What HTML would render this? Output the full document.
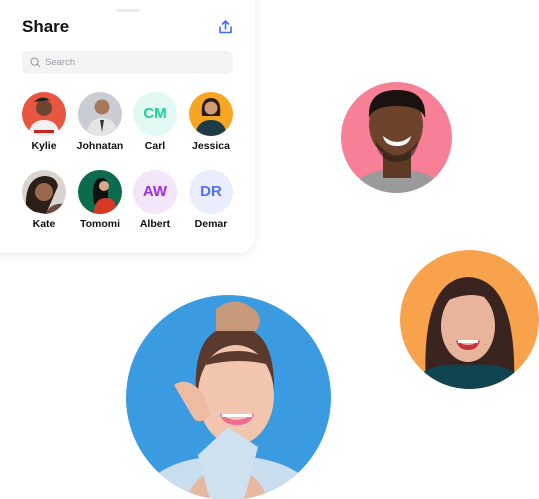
<!DOCTYPE html>
<html><head><meta charset="utf-8"><style>
html,body{margin:0;padding:0;background:#fff;width:539px;height:499px;overflow:hidden;position:relative;font-family:"Liberation Sans",sans-serif}
.card{position:absolute;left:-20px;top:-20px;width:275px;height:273px;background:#fff;border-radius:0 0 16px 0;box-shadow:0 2px 10px rgba(0,0,0,.08)}
.handle{position:absolute;left:116px;top:9px;width:24px;height:3px;border-radius:2px;background:#ececec}
.title{position:absolute;left:22px;top:17px;font-size:17px;font-weight:bold;color:#111}
.search{position:absolute;left:22px;top:51px;width:211px;height:23px;border-radius:6px;background:#f3f3f4}
.search span{position:absolute;left:23px;top:6px;font-size:9.5px;color:#9a9aa0}
.av{position:absolute;width:44px;height:44px;border-radius:50%;overflow:hidden;text-align:center;line-height:44px;font-size:15px;font-weight:bold}
.lb{position:absolute;width:70px;text-align:center;font-size:10.5px;font-weight:bold;color:#111}
svg{display:block}
</style></head><body>
<div class="card"></div>
<div class="handle"></div>
<div class="title">Share</div>
<svg style="position:absolute;left:218px;top:19px" width="15" height="16" viewBox="0 0 15 16"><path d="M7.5 10V2M4.5 5l3-3 3 3M2 8v5.5h11V8" fill="none" stroke="#3d6ef5" stroke-width="1.6" stroke-linecap="round" stroke-linejoin="round"/></svg>
<div class="search"><svg style="position:absolute;left:8px;top:6px" width="11" height="11" viewBox="0 0 11 11"><circle cx="4.6" cy="4.6" r="3.6" fill="none" stroke="#999" stroke-width="1.1"/><path d="M7.3 7.3l2.6 2.6" stroke="#999" stroke-width="1.1"/></svg><span>Search</span></div>

<div class="av" style="left:22px;top:92px;background:#e8563f"><svg width="44" height="44"><circle cx="22" cy="16" r="8" fill="#6b4633"/><path d="M12 10q10-10 20 2l-4-4z" fill="#222"/><path d="M6 44q2-16 16-16t16 16z" fill="#f2f2f2"/><rect x="12" y="38" width="20" height="3" fill="#c22"/></svg></div>
<div class="av" style="left:78px;top:92px;background:#c9ccd3"><svg width="44" height="44"><circle cx="24" cy="15" r="7.5" fill="#a77858"/><path d="M8 44q2-18 16-18t16 18z" fill="#e4e4e4"/><path d="M22 28l2 12 2-12z" fill="#333"/></svg></div>
<div class="av" style="left:133px;top:92px;background:#e2f8f2;color:#1fcf9b">CM</div>
<div class="av" style="left:189px;top:92px;background:#f6a623"><svg width="44" height="44"><path d="M13 24q-2-18 9-18t9 18z" fill="#2a1b15"/><circle cx="22" cy="16" r="6.5" fill="#d29a7a"/><path d="M6 44q2-16 16-16t16 16z" fill="#1e3b47"/></svg></div>
<div class="lb" style="left:9px;top:140px">Kylie</div>
<div class="lb" style="left:65px;top:140px">Johnatan</div>
<div class="lb" style="left:120px;top:140px">Carl</div>
<div class="lb" style="left:176px;top:140px">Jessica</div>

<div class="av" style="left:22px;top:170px;background:#d8d3cf"><svg width="44" height="44"><path d="M4 40q-2-32 18-34 12 0 14 10l-12 28z" fill="#2c1f1a"/><circle cx="22" cy="22" r="9" fill="#9b6a4e"/><path d="M24 44q4-12 20-10v10z" fill="#6a4a3a"/></svg></div>
<div class="av" style="left:78px;top:170px;background:#0c6b4c"><svg width="44" height="44"><path d="M16 34q-4-26 8-26 6 0 6 10v20z" fill="#111"/><circle cx="26" cy="16" r="5" fill="#d9a88a"/><path d="M16 44q0-16 12-16t10 16z" fill="#d63a25"/></svg></div>
<div class="av" style="left:133px;top:170px;background:#f3e6fb;color:#9b2ee0">AW</div>
<div class="av" style="left:189px;top:170px;background:#eaedfd;color:#5470f0">DR</div>
<div class="lb" style="left:9px;top:218px">Kate</div>
<div class="lb" style="left:65px;top:218px">Tomomi</div>
<div class="lb" style="left:120px;top:218px">Albert</div>
<div class="lb" style="left:176px;top:218px">Demar</div>

<svg style="position:absolute;left:341px;top:82px" width="111" height="111" viewBox="0 0 111 111"><defs><clipPath id="c1"><circle cx="55.5" cy="55.5" r="55.5"/></clipPath></defs><g clip-path="url(#c1)"><rect width="111" height="111" fill="#f77f96"/><path d="M10 111q4-22 46-24 42 2 46 24z" fill="#9a9a9a"/><rect x="42" y="62" width="28" height="34" fill="#5e3a26"/><ellipse cx="55" cy="43" rx="27" ry="32" fill="#6e432c"/><path d="M28 36q-2-28 28-28t28 28q-4-12-28-12t-28 12z" fill="#1a1210"/><path d="M42 54q14 12 28 0q-2 10-14 10t-14-10z" fill="#fff"/><path d="M34 58q22 30 44 0q-4 22-22 22t-22-22z" fill="#2a1a14" opacity=".6"/></g></svg>

<svg style="position:absolute;left:400px;top:250px" width="139" height="139" viewBox="0 0 139 139"><defs><clipPath id="c2"><circle cx="69.5" cy="69.5" r="69.5"/></clipPath></defs><g clip-path="url(#c2)"><rect width="139" height="139" fill="#f8a24c"/><path d="M26 139q-6-110 42-112 50 2 46 112z" fill="#3a2420"/><ellipse cx="68" cy="76" rx="27" ry="36" fill="#e8b49c"/><path d="M44 52q4-24 30-22 18 4 20 22q-20-14-50 0z" fill="#3a2420"/><path d="M56 90q12 10 24 0q-2 10-12 10t-12-10z" fill="#c7333c"/><path d="M58 90h20v3h-20z" fill="#fff"/><path d="M10 139q10-28 58-24 50-4 60 24z" fill="#0f4451"/></g></svg>

<svg style="position:absolute;left:126px;top:295px" width="205" height="205" viewBox="0 0 205 205"><defs><clipPath id="c3"><circle cx="102.5" cy="102.5" r="102.5"/></clipPath></defs><g clip-path="url(#c3)"><rect width="205" height="205" fill="#3a9be0"/><path d="M10 205q20-44 92-44 72 0 94 44z" fill="#c8ddee"/><path d="M60 205q10-30 42-34 30 4 40 34z" fill="#e7b8a0"/><path d="M70 100q-4-70 40-68 40 0 38 68z" fill="#5a3a2c"/><path d="M90 14q20-16 40 2 8 10 0 20h-40z" fill="#c69a7a"/><ellipse cx="110" cy="100" rx="38" ry="50" fill="#f1c5ae"/><path d="M80 70q4-14 32-14 24 0 32 14q-30-8-64 0z" fill="#5a3a2c"/><path d="M94 118q16 14 34 0q-2 12-17 12t-17-12z" fill="#ee6b94"/><path d="M96 119h30v3h-30z" fill="#fff"/><path d="M48 90q14-10 30 10l6 20q-10 10-16 4z" fill="#ecbba2"/><path d="M72 160l30-28 30 20-14 53h-34z" fill="#cfe0ef"/></g></svg>
</body></html>
